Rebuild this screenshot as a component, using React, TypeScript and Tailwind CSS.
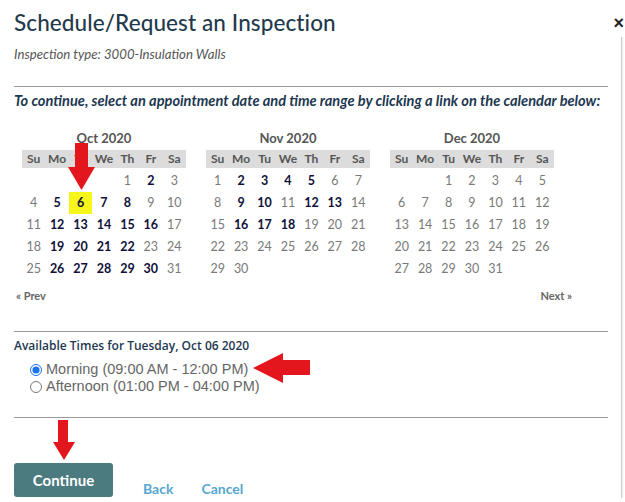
import React from "react";

type Month = { name: string; start: number; days: number; avail: number[] };

const months: Month[] = [
  { name: "Oct 2020", start: 4, days: 31, avail: [2, 5, 6, 7, 8, 12, 13, 14, 15, 16, 19, 20, 21, 22, 26, 27, 28, 29, 30] },
  { name: "Nov 2020", start: 0, days: 30, avail: [2, 3, 4, 5, 9, 10, 12, 13, 16, 17, 18] },
  { name: "Dec 2020", start: 2, days: 31, avail: [] },
];

const heads = ["Su", "Mo", "Tu", "We", "Th", "Fr", "Sa"];

function Calendar({ m, selected }: { m: Month; selected?: number }) {
  const cells: (number | null)[] = [];
  for (let i = 0; i < m.start; i++) cells.push(null);
  for (let d = 1; d <= m.days; d++) cells.push(d);
  return (
    <div className="w-[164px]">
      <div className="h-[22px] flex items-center justify-center text-[13px] font-bold text-[#555]">{m.name}</div>
      <div className="grid grid-cols-7 bg-[#dcdcdc] h-[18px] items-center text-[12px] font-bold text-[#555]">
        {heads.map((h) => (
          <div key={h} className="text-center">{h}</div>
        ))}
      </div>
      <div className="grid grid-cols-7 mt-[2px] text-[12.5px]">
        {cells.map((d, i) => {
          const avail = d !== null && m.avail.includes(d);
          const sel = d === selected;
          return (
            <div
              key={i}
              className={
                "h-[22px] flex items-center justify-center " +
                (sel ? "bg-[#f6f61a] " : "") +
                (avail ? "font-bold text-[#10103a]" : "text-[#7a7a7a]")
              }
            >
              {d ?? ""}
            </div>
          );
        })}
      </div>
    </div>
  );
}

function DownArrow({ className }: { className: string }) {
  return (
    <svg className={className} viewBox="0 0 27 47" preserveAspectRatio="none">
      <polygon points="7,0 20,0 20,24 27,24 13.5,47 0,24 7,24" fill="#e3161e" />
    </svg>
  );
}

export default function App() {
  return (
    <div className="relative w-[625px] h-[502px] bg-white overflow-hidden font-['Lato',sans-serif]">
      <div className="absolute left-[621px] top-[37px] bottom-[4px] w-[1px] bg-[#cfcfcf] shadow-[1px_0_2px_rgba(0,0,0,0.12)]" />
      <div className="w-[608px] pl-[14px]">
        <div className="flex items-start justify-between pt-[8px]">
          <h1 className="text-[22.5px] leading-[30px] font-medium text-[#1f3a4c] tracking-[0.1px]">Schedule/Request an Inspection</h1>
          <span className="text-[18px] font-bold text-[#222] leading-[30px] mr-[-16px] font-['Liberation_Sans',sans-serif]">×</span>
        </div>
        <div className="mt-[7px] text-[13.2px] italic text-[#555] leading-[18px]">Inspection type: 3000-Insulation Walls</div>
        <div className="mt-[23px] border-t border-[#999]" />
        <div className="mt-[4px] text-[14.6px] font-bold italic text-[#1d3850] leading-[20px]">
          To continue, select an appointment date and time range by clicking a link on the calendar below:
        </div>
        <div className="mt-[17px] flex gap-[20px] pl-[8px]">
          <Calendar m={months[0]} selected={6} />
          <Calendar m={months[1]} />
          <Calendar m={months[2]} />
        </div>
        <div className="mt-[6px] flex justify-between w-[558px] text-[11px] font-bold text-[#666] leading-[20px] pl-[2px]">
          <span>« Prev</span>
          <span>Next »</span>
        </div>
        <div className="mt-[25px] border-t border-[#999]" />
        <div className="mt-[5px] text-[12px] font-semibold text-[#1d3850] leading-[18px] font-['Open_Sans',sans-serif]">
          Available Times for Tuesday, Oct 06 2020
        </div>
        <div className="ml-[16px] mt-[6px] font-['Liberation_Sans',sans-serif] text-[14.5px] text-[#666] leading-[17px]">
          <label className="flex items-center gap-[4px]">
            <input type="radio" name="t" defaultChecked className="w-[12px] h-[12px] m-0 accent-[#1a73e8]" />
            Morning (09:00 AM - 12:00 PM)
          </label>
          <label className="flex items-center gap-[4px]">
            <input type="radio" name="t" className="w-[12px] h-[12px] m-0" />
            Afternoon (01:00 PM - 04:00 PM)
          </label>
        </div>
        <div className="mt-[22px] border-t border-[#999]" />
        <div className="mt-[45px] flex items-end gap-[30px]">
          <button className="w-[99px] h-[34px] rounded-[3px] bg-[#4b7a7f] text-white text-[15px] font-bold">Continue</button>
          <span className="text-[14px] font-bold text-[#57a7cf] leading-[18px] mb-[-1px]">Back</span>
          <span className="text-[14px] font-bold text-[#57a7cf] leading-[18px] mb-[-1px] ml-[-2px]">Cancel</span>
        </div>
      </div>

      <DownArrow className="absolute left-[68px] top-[143px] w-[27px] h-[47px]" />
      <svg className="absolute left-[253px] top-[353px] w-[57px] h-[30px]" viewBox="0 0 57 30" preserveAspectRatio="none">
        <polygon points="0,15 30,0 30,7 57,7 57,22 30,22 30,30" fill="#e3161e" />
      </svg>
      <svg className="absolute left-[53px] top-[420px] w-[22px] h-[40px]" viewBox="0 0 22 40" preserveAspectRatio="none">
        <polygon points="5,0 15,0 15,22 22,22 11,40 0,22 5,22" fill="#e3161e" />
      </svg>
    </div>
  );
}
